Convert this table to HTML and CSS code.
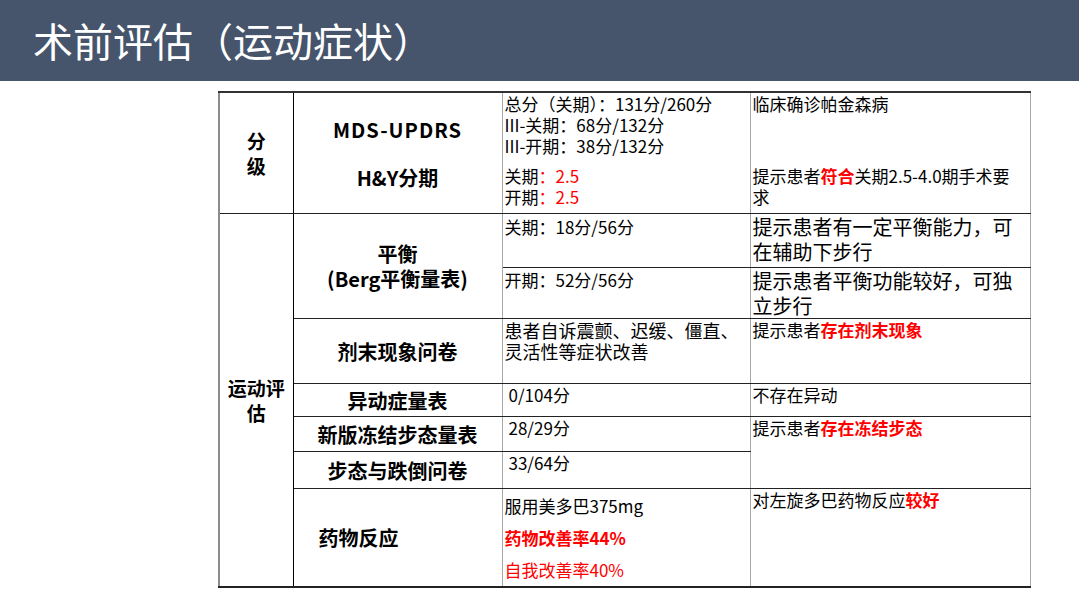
FILE: index.html
```html
<!DOCTYPE html>
<html lang="zh-CN">
<head>
<meta charset="utf-8">
<title>术前评估（运动症状）</title>
<link rel="stylesheet" href="styles.css">
</head>
<body>
<header class="bar"><h1 class="title">术前评估（运动症状）</h1></header>
<main class="content">
<table class="eval">
  <colgroup>
    <col class="c1"><col class="c2"><col class="c3"><col class="c4">
  </colgroup>
  <tbody>
    <tr class="r1a">
      <td rowspan="2" class="cat">分<br>级</td>
      <td class="item mid nob latin">MDS-UPDRS</td>
      <td class="val nob">总分（关期）：131分/260分<br>III-关期：68分/132分<br>III-开期：38分/132分</td>
      <td class="note nob">临床确诊帕金森病</td>
    </tr>
    <tr class="r1b">
      <td class="item top">H&amp;Y分期</td>
      <td class="val">关期<span class="red">：2.5</span><br>开期<span class="red">：2.5</span></td>
      <td class="note">提示患者<b class="red">符合</b>关期2.5-4.0期手术要<br>求</td>
    </tr>
    <tr class="r2a">
      <td rowspan="7" class="cat">运动评<br>估</td>
      <td rowspan="2" class="item two">平衡<br>(Berg平衡量表)</td>
      <td class="val pt2">关期：18分/56分</td>
      <td class="note big">提示患者有一定平衡能力，可<br>在辅助下步行</td>
    </tr>
    <tr class="r2b">
      <td class="val pt1">开期：52分/56分</td>
      <td class="note big">提示患者平衡功能较好，可独<br>立步行</td>
    </tr>
    <tr class="r3">
      <td class="item">剂末现象问卷</td>
      <td class="val wide">患者自诉震颤、迟缓、僵直、<br>灵活性等症状改善</td>
      <td class="note">提示患者<b class="red">存在剂末现象</b></td>
    </tr>
    <tr class="r4">
      <td class="item">异动症量表</td>
      <td class="val ind">0/104分</td>
      <td class="note">不存在异动</td>
    </tr>
    <tr class="r5">
      <td class="item">新版冻结步态量表</td>
      <td class="val ind">28/29分</td>
      <td rowspan="2" class="note">提示患者<b class="red">存在冻结步态</b></td>
    </tr>
    <tr class="r6">
      <td class="item">步态与跌倒问卷</td>
      <td class="val ind">33/64分</td>
    </tr>
    <tr class="r7">
      <td class="item left">药物反应</td>
      <td class="val drug">服用美多巴375mg<br><b class="red">药物改善率44%</b><br><span class="red">自我改善率40%</span></td>
      <td class="note">对左旋多巴药物反应<b class="red">较好</b></td>
    </tr>
  </tbody>
</table>
</main>
</body>
</html>
```
FILE: styles.css
```css
html, body {
  margin: 0;
  padding: 0;
  background: #ffffff;
}
body {
  width: 1079px;
  height: 607px;
  overflow: hidden;
  font-family: "Noto Sans CJK SC", "Noto Sans", sans-serif;
  color: #000;
}
.bar {
  height: 81px;
  background: #46556b;
  display: flex;
  align-items: center;
  padding-left: 33px;
  box-sizing: border-box;
}
.title {
  margin: 0;
  padding-bottom: 2px;
  font-size: 40px;
  font-weight: 400;
  color: #ffffff;
  line-height: 1;
  letter-spacing: 0;
}
.content {
  padding: 10px 0 0 218px;
}
.eval {
  border-collapse: collapse;
  table-layout: fixed;
  width: 811px;
  border-top: 2px solid #333;
  border-left: 2px solid #8c8c8c;
  border-right: 1px solid #444;
  border-bottom: 2px solid #222;
}
.c1 { width: 74px; }
.c2 { width: 209px; }
.c3 { width: 248px; }
.c4 { width: 280px; }
.eval td {
  padding: 0;
  border-top: 1px solid #222;
  border-bottom: 1px solid #222;
  border-left: 1px solid #a8a8a8;
  border-right: 1px solid #a8a8a8;
  font-size: 17px;
  line-height: 21px;
  vertical-align: top;
  white-space: nowrap;
}
.eval td.nob { border-bottom: none; }
.r1b td { border-top: none; }
.eval td.cat {
  border-right: 1px solid #000;
  text-align: center;
  vertical-align: middle;
  font-weight: 700;
  font-size: 19px;
  line-height: 25px;
}
.eval td.item {
  border-left: 1px solid #000;
  text-align: center;
  vertical-align: middle;
  font-weight: 700;
  font-size: 20px;
  line-height: 25px;
}
.eval td.item.latin { letter-spacing: 1px; }
.eval td.item.top { vertical-align: top; padding-top: 0; }
.eval td.item.left { text-align: left; padding-left: 25px; }
.eval td.val { padding-left: 2px; }
.eval td.note { padding-left: 2px; }
.eval td.note.big { font-size: 20px; line-height: 25px; }
.eval td.val.pt2 { padding-top: 2px; }
.eval td.val.pt1 { padding-top: 1px; }
.eval td.val.wide { font-size: 18px; padding-top: 1px; }
.eval td.val.ind { padding-left: 6px; }
.eval td.val.drug { line-height: 32px; padding-top: 1px; }
.r1a td { height: 72px; }
.r1b td { height: 48px; }
.r2a td { height: 51px; }
.r2b td { height: 47px; }
.r3 td { height: 63px; }
.r4 td { height: 32px; }
.r5 td { height: 34px; }
.r6 td { height: 36px; }
.r7 td { height: 95px; }
.red { color: #ff0000; }
b.red { font-weight: 700; }
```
